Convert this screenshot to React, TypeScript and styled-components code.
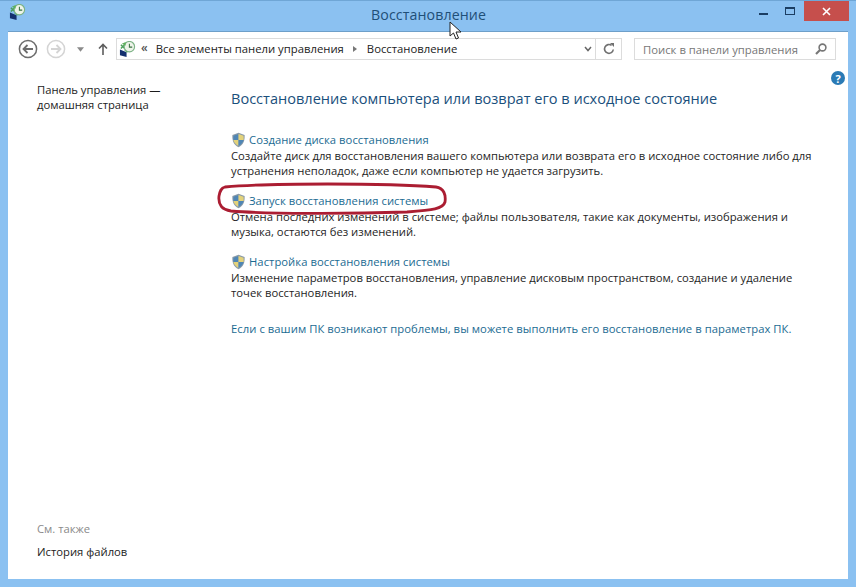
import React from "react";
import styled, { createGlobalStyle } from "styled-components";

const Global = createGlobalStyle`
  html, body { margin: 0; padding: 0; height: 100%; background: #8cc2f2; overflow: hidden; }
  #root { height: 100%; }
  * { box-sizing: border-box; }
`;
const Win = styled.div`
  position: relative; width: 856px; height: 587px; display: flex; flex-direction: column;
  padding: 0 8px 8px; background: #8bc1f1; border-top: 1px solid #6fa6d6;
  font-family: "Open Sans", "Noto Sans", sans-serif; color: #1c1c1c; font-size: 11.25px; overflow: hidden;
`;
const TitleBar = styled.header`
  height: 30px; flex: none; position: relative; display: flex; align-items: center; justify-content: center;
`;
const TitleIcon = styled.span`
  position: absolute; left: 1px; top: 3px; display: flex;
`;
const Title = styled.h1`
  margin: 0 0 0 1px; padding-bottom: 4px; font-size: 14.2px; font-weight: 400; color: #1f4f78; letter-spacing: .1px;
`;
const WinButtons = styled.div`
  position: absolute; right: -1px; top: 0; display: flex; align-items: flex-start;
`;
const WinBtn = styled.span`
  width: 27px; height: 20px; display: flex; align-items: center; justify-content: center;
`;
const CloseBtn = styled.span`
  width: 45px; height: 20px; background: #c64f4c; display: flex; align-items: center; justify-content: center;
`;
const Body = styled.div`
  flex: 1; background: #fff; display: flex; flex-direction: column; min-height: 0; border-top: 1px solid #6e9fc9;
`;
const Toolbar = styled.nav`
  height: 31px; flex: none; display: flex; align-items: flex-start; padding: 6px 12px 0 9px; position: relative;
`;
const NavIcon = styled.span<{ $w: number; $pad?: number }>`
  width: ${p => p.$w}px; height: 22px; padding-left: ${p => p.$pad ?? 0}px; display: flex; align-items: center; justify-content: center; flex: none;
`;
const Address = styled.div`
  width: 506px; height: 22px; border: 1px solid #dcdcdc; display: flex; align-items: center; padding-left: 2px; color: #222;
`;
const Crumb = styled.span`
  white-space: nowrap; font-size: 11.3px; margin-bottom: 1px;
`;
const Chevrons = styled.span`
  color: #555; font-size: 12px; font-weight: 600; line-height: 1; margin: 0 8px 2px 5px;
`;
const Caret = styled.span`
  width: 0; height: 0; margin: 0 10px 0 9px; border-left: 4px solid #777; border-top: 3px solid transparent; border-bottom: 3px solid transparent;
`;
const AddrRight = styled.span`
  margin-left: auto; display: flex; height: 100%; align-items: center;
`;
const Drop = styled.span`
  width: 15px; display: flex; justify-content: center;
`;
const Refresh = styled.span`
  width: 26px; height: 100%; border-left: 1px solid #dcdcdc; display: flex; align-items: center; justify-content: center;
`;
const Search = styled.div`
  margin-left: 12px; width: 202px; height: 22px; border: 1px solid #dcdcdc; display: flex; align-items: center; justify-content: space-between; padding: 0 8px; color: #777; white-space: nowrap; font-size: 11.3px;
`;
const Help = styled.span`
  position: absolute; right: 3px; top: 39px; width: 14px; height: 14px; border-radius: 50%; background: #2a7ab5; color: #fff; font-size: 11px; font-weight: 700; display: flex; align-items: center; justify-content: center;
`;
const Panes = styled.div`
  flex: 1; display: flex; min-height: 0;
`;
const Side = styled.aside`
  width: 223px; flex: none; padding: 19px 0 20px 29px; display: flex; flex-direction: column; line-height: 15px;
`;
const SideTop = styled.div`
  flex: 1;
`;
const SeeAlso = styled.div`
  color: #8a8a8a; margin-bottom: 8px;
`;
const Main = styled.main`
  flex: 1; padding: 25px 20px 0 0; min-width: 0;
`;
const Heading = styled.h2`
  margin: 0 0 24px; font-size: 14.55px; line-height: 20px; font-weight: 400; color: #1a4f7c; white-space: nowrap;
`;
const Section = styled.section`
  margin-bottom: 15px; line-height: 15px;
`;
const LinkRow = styled.a`
  display: flex; align-items: center; color: #1b6b92; line-height: 16px; height: 16px; white-space: nowrap; letter-spacing: .04px;
`;
const ShieldBox = styled.span`
  width: 18px; display: flex; flex: none;
`;
const Desc = styled.p`
  margin: 0; color: #1e1e1e; white-space: nowrap;
`;
const Plain = styled.a`
  display: block; margin-top: 21px; color: #1b6b92; white-space: nowrap; letter-spacing: .05px;
`;
const Oval = styled.svg`
  position: absolute; left: 217px; top: 181px;
`;
const Cursor = styled.svg`
  position: absolute; left: 449px; top: 20px;
`;

const Shield = () => (
  <svg width="15" height="16" viewBox="0 0 15 16">
    <path d="M7.5 .8 L13.6 3 C14 8.5 12.5 12.6 7.5 15.2 C2.5 12.6 1 8.5 1.4 3 Z" fill="#8a9aa8" />
    <path d="M7.5 2 V8 H2.4 C2.3 6 2.4 4.8 2.5 3.7 Z" fill="#4f86b5" />
    <path d="M7.5 2 V8 H12.6 C12.7 6 12.6 4.8 12.5 3.7 Z" fill="#e3d27a" />
    <path d="M7.5 8 V14 C4.6 12.4 3 10.5 2.4 8 Z" fill="#e3d27a" />
    <path d="M7.5 8 V14 C10.4 12.4 12 10.5 12.6 8 Z" fill="#4f86b5" />
  </svg>
);
const AppIcon = ({ size }: { size: number }) => (
  <svg width={size} height={size} viewBox="0 0 18 18">
    <path d="M1 9 L8 12 V17 L1 15 Z" fill="#14306e" />
    <path d="M2 4 L6 8 M6 4 L2 8" stroke="#4aa05a" strokeWidth="1.6" />
    <path d="M6 9 L9 12" stroke="#4aa05a" strokeWidth="1.6" />
    <circle cx="11" cy="6" r="5.5" fill="#eef4ea" stroke="#7db386" strokeWidth="1.2" />
    <path d="M11 3 V6.5 H14" fill="none" stroke="#38703f" strokeWidth="1.1" />
    <path d="M3 3 L7 1 V5 Z" fill="#5fb05c" />
  </svg>
);
const Circled = ({ color, dir }: { color: string; dir: "l" | "r" }) => (
  <svg width="20" height="20" viewBox="0 0 20 20">
    <circle cx="10" cy="10" r="8.6" fill="#fff" stroke={color} strokeWidth="1.5" />
    <path d={dir === "l" ? "M15 10 H5.5 M9.5 6 L5.5 10 L9.5 14" : "M5 10 H14.5 M10.5 6 L14.5 10 L10.5 14"} fill="none" stroke={color} strokeWidth="1.8" />
  </svg>
);

export default function App() {
  return (
    <Win>
      <Global />
      <TitleBar>
        <TitleIcon><AppIcon size={17} /></TitleIcon>
        <Title>Восстановление</Title>
        <WinButtons>
          <WinBtn>
            <svg width="9" height="9" viewBox="0 0 9 9"><rect x="0" y="6" width="9" height="2" fill="#1b3e63" /></svg>
          </WinBtn>
          <WinBtn>
            <svg width="11" height="9" viewBox="0 0 11 9"><rect x=".5" y=".5" width="9" height="7" fill="none" stroke="#1b3e63" /><rect x="0" y="0" width="10" height="2" fill="#1b3e63" /></svg>
          </WinBtn>
          <CloseBtn>
            <svg width="9" height="9" viewBox="0 0 9 9"><path d="M1 1 L8 8 M8 1 L1 8" stroke="#fff" strokeWidth="1.6" /></svg>
          </CloseBtn>
        </WinButtons>
      </TitleBar>
      <Body>
        <Toolbar>
          <NavIcon $w={21}><Circled color="#6d6d6d" dir="l" /></NavIcon>
          <NavIcon $w={36}><Circled color="#d4d4d4" dir="r" /></NavIcon>
          <NavIcon $w={12}>
            <svg width="7" height="5" viewBox="0 0 8 5"><path d="M0 0 H8 L4 5 Z" fill="#8a8a8a" /></svg>
          </NavIcon>
          <NavIcon $w={30} $pad={4}>
            <svg width="10" height="12" viewBox="0 0 10 12"><path d="M5 12 V1.5 M1 5.5 L5 1.5 L9 5.5" fill="none" stroke="#5d5d5d" strokeWidth="1.6" /></svg>
          </NavIcon>
          <Address>
            <AppIcon size={17} />
            <Chevrons>«</Chevrons>
            <Crumb>Все элементы панели управления</Crumb>
            <Caret />
            <Crumb>Восстановление</Crumb>
            <AddrRight>
              <Drop>
                <svg width="8" height="6" viewBox="0 0 8 6"><path d="M1 1 L4 4.5 L7 1" fill="none" stroke="#666" strokeWidth="1.5" /></svg>
              </Drop>
              <Refresh>
                <svg width="12" height="12" viewBox="0 0 12 12"><path d="M10.3 6.5 A4.4 4.4 0 1 1 8.6 2.4" fill="none" stroke="#707070" strokeWidth="1.6" /><path d="M7 0 H11 V4 Z" fill="#707070" /></svg>
              </Refresh>
            </AddrRight>
          </Address>
          <Search>
            <span>Поиск в панели управления</span>
            <svg width="12" height="12" viewBox="0 0 12 12"><circle cx="7.5" cy="4.5" r="3.4" fill="none" stroke="#777" strokeWidth="1.6" /><path d="M5 7 L1 11" stroke="#777" strokeWidth="2.2" /></svg>
          </Search>
          <Help>?</Help>
        </Toolbar>
        <Panes>
          <Side>
            <SideTop>Панель управления —<br />домашняя страница</SideTop>
            <SeeAlso>См. также</SeeAlso>
            <div>История файлов</div>
          </Side>
          <Main>
            <Heading>Восстановление компьютера или возврат его в исходное состояние</Heading>
            <Section>
              <LinkRow><ShieldBox><Shield /></ShieldBox>Создание диска восстановления</LinkRow>
              <Desc>Создайте диск для восстановления вашего компьютера или возврата его в исходное состояние либо для</Desc>
              <Desc>устранения неполадок, даже если компьютер не удается загрузить.</Desc>
            </Section>
            <Section>
              <LinkRow><ShieldBox><Shield /></ShieldBox>Запуск восстановления системы</LinkRow>
              <Desc>Отмена последних изменений в системе; файлы пользователя, такие как документы, изображения и</Desc>
              <Desc>музыка, остаются без изменений.</Desc>
            </Section>
            <Section>
              <LinkRow><ShieldBox><Shield /></ShieldBox>Настройка восстановления системы</LinkRow>
              <Desc>Изменение параметров восстановления, управление дисковым пространством, создание и удаление</Desc>
              <Desc>точек восстановления.</Desc>
            </Section>
            <Plain>Если с вашим ПК возникают проблемы, вы можете выполнить его восстановление в параметрах ПК.</Plain>
          </Main>
        </Panes>
      </Body>
      <Oval width="232" height="36" viewBox="0 0 232 36">
        <path d="M8 5 C50 1 170 1 219 5 C227 6 229 13 228 20 C226 27 216 28 190 30 C130 32 50 32 14 29 C5 28 1 23 2 14 C3 9 4 6 8 5 Z" fill="none" stroke="#ab1d32" strokeWidth="2.8" />
      </Oval>
      <Cursor width="14" height="20" viewBox="0 0 14 20">
        <path d="M1 1 V15 L4.5 12 L7 18 L9.5 17 L7 11 H12 Z" fill="#fff" stroke="#222" strokeWidth="1" />
      </Cursor>
    </Win>
  );
}
